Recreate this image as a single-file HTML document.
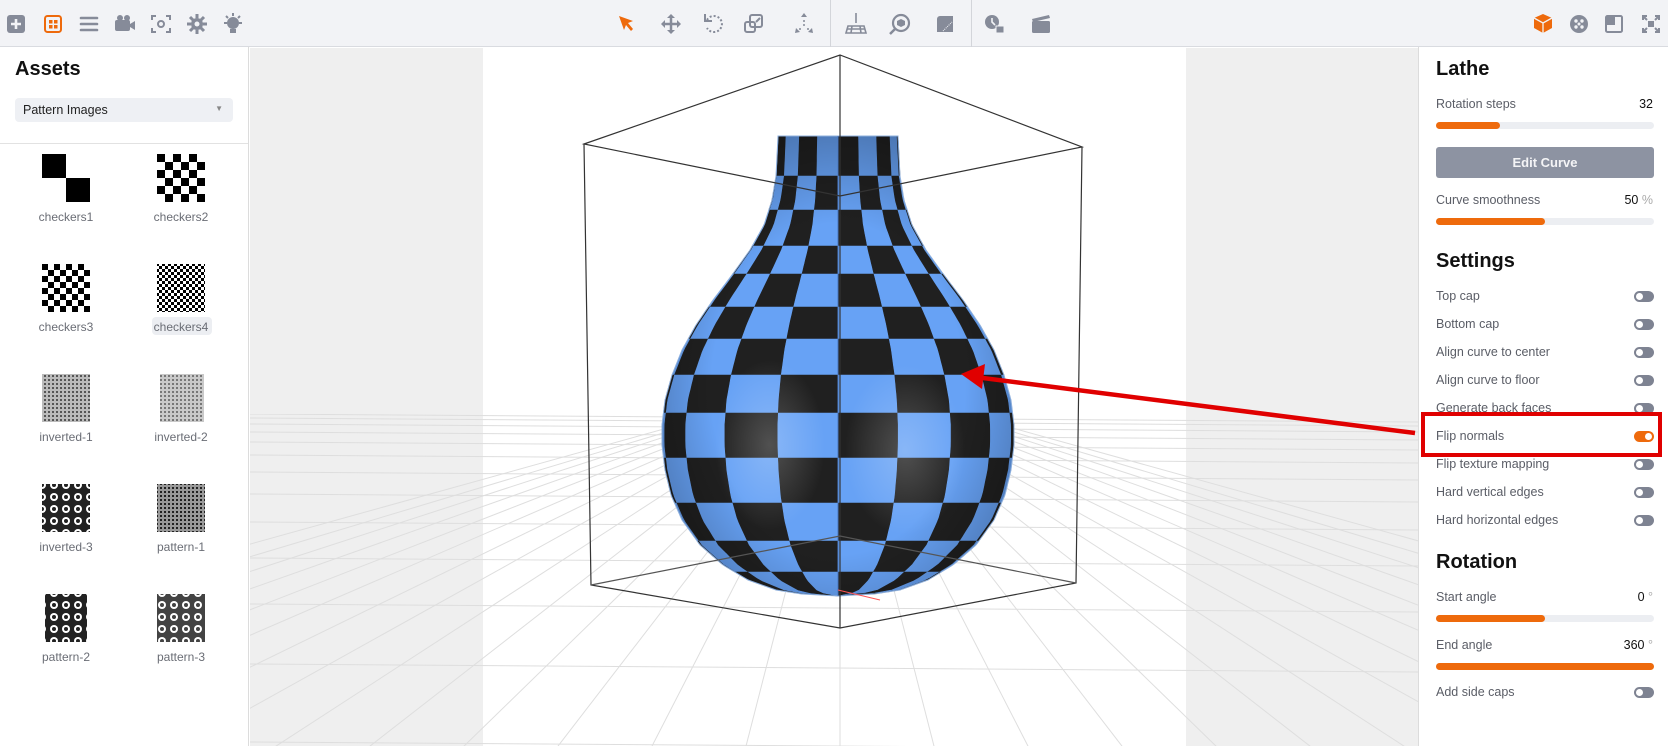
<!DOCTYPE html>
<html><head><meta charset="utf-8"><style>
*{margin:0;padding:0;box-sizing:border-box}
html,body{width:1668px;height:746px;overflow:hidden}
body{background:#fff;font-family:"Liberation Sans",sans-serif;position:relative}
.tb{position:absolute;left:0;top:0;width:1668px;height:47px;background:#f2f3f6;border-bottom:1px solid #d9dbe0}
.sep{position:absolute;top:0;width:1px;height:47px;background:#d3d5da}
.lp{position:absolute;left:0;top:47px;width:249px;height:699px;background:#fff;border-right:1px solid #dcdcdc;overflow:hidden}
.rp{position:absolute;left:1418px;top:47px;width:250px;height:699px;background:#fff;border-left:1px solid #dcdcdc;overflow:hidden}
.h{position:absolute;font-weight:bold;font-size:20px;color:#111}
.lbl{position:absolute;font-size:12.5px;color:#5a5d66}
.val{position:absolute;right:15px;font-size:12.5px;color:#111}
.sl{position:absolute;left:17px;width:218px;height:7px;border-radius:4px;background:#eceef2}
.sl i{display:block;height:7px;border-radius:4px;background:#ee6a0c}
.tg{position:absolute;left:215px;width:20px;height:11px;border-radius:6px;background:#7e8392}
.tg:after{content:"";position:absolute;left:2px;top:2px;width:7px;height:7px;border-radius:50%;background:#fff}
.tg.on{background:#ee6a0c}.tg.on:after{left:11px}
.tl{position:absolute;font-size:12px;color:#6a6d75;text-align:center;width:100px}
</style></head><body>
<div class="tb">
<svg style="position:absolute;left:0;top:0" width="1668" height="47">
<rect x="7" y="15" width="18" height="18" rx="3" fill="#868b99"/>
<path d="M16 19v10M11 24h10" stroke="#f2f3f6" stroke-width="2.6"/>
<rect x="45" y="16" width="16" height="16" rx="2.5" fill="none" stroke="#ee6a0c" stroke-width="2"/>
<g fill="#ee6a0c"><rect x="49" y="20" width="3.5" height="3.5"/><rect x="54" y="20" width="3.5" height="3.5"/><rect x="49" y="25" width="3.5" height="3.5"/><rect x="54" y="25" width="3.5" height="3.5"/></g>
<g stroke="#868b99" stroke-width="2.6" stroke-linecap="round"><path d="M81 18h16M81 24h16M81 30h16"/></g>
<g fill="#868b99"><circle cx="120" cy="18" r="3"/><circle cx="127" cy="18" r="3"/><rect x="115" y="20" width="15" height="11" rx="2"/><path d="M130 24l5-3v9l-5-3z"/></g>
<g fill="none" stroke="#868b99" stroke-width="2"><path d="M152 20v-4h4M166 16h4v4M170 28v4h-4M156 32h-4v-4"/><circle cx="161" cy="24" r="3"/></g>
<circle cx="197" cy="24" r="6" fill="#868b99"/>
<circle cx="197" cy="24" r="2.5" fill="#f2f3f6"/>
<g stroke="#868b99" stroke-width="3"><path d="M197 14v4M197 30v4M187 24h4M203 24h4M190 17l3 3M204 17l-3 3M190 31l3-3M204 31l-3-3"/></g>
<g fill="#868b99"><circle cx="233" cy="23" r="6"/><rect x="230" y="29" width="6" height="4"/></g>
<g stroke="#868b99" stroke-width="2"><path d="M233 13v3M224 23h3M239 23h3M226 16l2 2M240 16l-2 2"/></g>
<path d="M619 16l14 5-5 2 5 6-2 2-5-6-2 5z" fill="#ee6a0c"/>
<g fill="#868b99"><path d="M671 14l4 4h-8zM671 34l4-4h-8zM661 24l4-4v8zM681 24l-4-4v8z"/></g><path d="M671 17v14M664 24h14" stroke="#868b99" stroke-width="2.5"/>
<path d="M707 20a8 8 0 1 1 0 8" fill="none" stroke="#868b99" stroke-width="2" stroke-dasharray="2 2"/><path d="M705 14v7h7" fill="none" stroke="#868b99" stroke-width="2"/>
<rect x="750" y="15" width="12" height="12" rx="2" fill="none" stroke="#868b99" stroke-width="2"/><rect x="745" y="22" width="10" height="10" rx="2" fill="none" stroke="#868b99" stroke-width="2"/><path d="M756 22l4-4" stroke="#868b99" stroke-width="2"/>
<g fill="#868b99"><path d="M804 13l3 4h-6zM795 33l1-5 4 4zM813 33l-1-5-4 4z"/><circle cx="804" cy="21" r="1"/><circle cx="804" cy="25" r="1"/><circle cx="800" cy="29" r="1"/><circle cx="808" cy="29" r="1"/></g>
<g stroke="#868b99" stroke-width="1.6" fill="none"><path d="M856 13v10"/><path d="M848 26h16l2 7h-20z"/><path d="M852 26l-1 7M860 26l1 7M847 29h18"/></g>
<circle cx="901" cy="23" r="8" fill="none" stroke="#868b99" stroke-width="2.2"/><path d="M895 29l-5 5" stroke="#868b99" stroke-width="2.5"/><path d="M901 19l4 2v4l-4 2-4-2v-4z" fill="#868b99"/>
<path d="M937 32l0-13a3 3 0 0 1 3-3h13v16z" fill="#868b99"/><path d="M943 31l9-9" stroke="#f2f3f6" stroke-width="1" stroke-dasharray="1 1"/>
<circle cx="992" cy="22" r="7" fill="#868b99"/><path d="M992 18v4l3 3" stroke="#f2f3f6" stroke-width="1.6" fill="none"/><rect x="996" y="26" width="8" height="7" fill="#868b99" stroke="#f2f3f6"/>
<rect x="1032" y="21" width="18" height="12" rx="1.5" fill="#868b99"/><path d="M1032 19l17-4 1 3-17 4z" fill="#868b99"/>
<path d="M1543 14l9 4v10l-9 5-9-5v-10z" fill="#ee6a0c"/><path d="M1534 18l9 5 9-5M1543 23v10" stroke="#f2f3f6" stroke-width="1.3" fill="none"/>
<circle cx="1579" cy="24" r="9" fill="#868b99"/><g fill="#f2f3f6"><circle cx="1576" cy="21" r="1.7"/><circle cx="1582" cy="21" r="1.7"/><circle cx="1576" cy="27" r="1.7"/><circle cx="1582" cy="27" r="1.7"/><circle cx="1579" cy="24" r="1.5"/></g>
<rect x="1606" y="16" width="16" height="16" rx="1.5" fill="none" stroke="#868b99" stroke-width="2"/><path d="M1607 17h8v8h-8z" fill="#868b99"/>
<g stroke="#868b99" stroke-width="2" fill="none"><path d="M1643 16l4 4M1659 16l-4 4M1643 32l4-4M1659 32l-4-4M1643 20v-4h4M1659 20v-4h-4M1643 28v4h4M1659 28v4h-4"/></g><rect x="1648" y="21" width="6" height="6" fill="#868b99"/>
</svg>
<div class="sep" style="left:830px"></div><div class="sep" style="left:971px"></div>
</div>

<div class="lp">
<div class="h" style="left:15px;top:11px">Assets</div>
<div style="position:absolute;left:15px;top:51px;width:218px;height:24px;background:#eef0f4;border-radius:4px;font-size:12.5px;color:#222;padding:5px 8px">Pattern Images<span style="position:absolute;right:10px;top:6px;font-size:8px;color:#888">▼</span></div>
<div style="position:absolute;left:0;top:96px;width:249px;height:1px;background:#e2e2e2"></div>
<svg style="position:absolute;left:0;top:0" width="249" height="699">
<defs>
<pattern id="c2" width="16" height="16" patternUnits="userSpaceOnUse" x="157" y="107"><rect width="8" height="8"/><rect x="8" y="8" width="8" height="8"/></pattern>
<pattern id="c3" width="12" height="12" patternUnits="userSpaceOnUse" x="42" y="217"><rect width="6" height="6"/><rect x="6" y="6" width="6" height="6"/></pattern>
<pattern id="c4" width="6" height="6" patternUnits="userSpaceOnUse"><rect width="3" height="3"/><rect x="3" y="3" width="3" height="3"/></pattern>
<pattern id="i1" width="4" height="4" patternUnits="userSpaceOnUse"><rect width="4" height="4" fill="#bbb"/><rect width="2" height="2" fill="#555"/></pattern>
<pattern id="p3" width="12" height="12" patternUnits="userSpaceOnUse"><rect width="12" height="12" fill="#222"/><circle cx="6" cy="6" r="4" fill="#fff"/><circle cx="6" cy="6" r="2" fill="#222"/></pattern>
<pattern id="p1" width="4" height="4" patternUnits="userSpaceOnUse"><rect width="4" height="4" fill="#999"/><rect width="2" height="2" fill="#222"/></pattern>
</defs>
<g transform="translate(42,107)"><rect width="24" height="24"/><rect x="24" y="24" width="24" height="24"/></g>
<rect x="157" y="107" width="48" height="48" fill="url(#c2)"/>
<rect x="42" y="217" width="48" height="48" fill="url(#c3)"/>
<rect x="157" y="217" width="48" height="48" fill="url(#c4)"/>
<rect x="42" y="327" width="48" height="48" fill="url(#i1)"/>
<rect x="160" y="327" width="44" height="48" fill="url(#i1)" opacity=".8"/>
<rect x="42" y="437" width="48" height="48" fill="url(#p3)"/>
<rect x="157" y="437" width="48" height="48" fill="url(#p1)"/>
<rect x="45" y="547" width="42" height="48" fill="url(#p3)"/>
<rect x="157" y="547" width="48" height="48" fill="url(#p3)" opacity=".85"/>
</svg>
<div class="tl" style="left:16px;top:163px">checkers1</div>
<div class="tl" style="left:131px;top:163px">checkers2</div>
<div class="tl" style="left:16px;top:273px">checkers3</div>
<div style="position:absolute;left:152px;top:270px;width:60px;height:18px;background:#eceef2;border-radius:4px"></div>
<div class="tl" style="left:131px;top:273px">checkers4</div>
<div class="tl" style="left:16px;top:383px">inverted-1</div>
<div class="tl" style="left:131px;top:383px">inverted-2</div>
<div class="tl" style="left:16px;top:493px">inverted-3</div>
<div class="tl" style="left:131px;top:493px">pattern-1</div>
<div class="tl" style="left:16px;top:603px">pattern-2</div>
<div class="tl" style="left:131px;top:603px">pattern-3</div>
</div>

<svg id="vp" style="position:absolute;left:250px;top:48px;display:block" width="1168" height="698" viewBox="250 48 1168 698">
<rect x="250" y="48" width="1168" height="698" fill="#efefef"/>
<rect x="483" y="48" width="703" height="698" fill="#fff"/>
<g id="grid" stroke="#dedede" stroke-width="1" fill="none"></g>
<g id="vase"></g>
<g stroke="#333" stroke-width="1.2" fill="none">
<path d="M584 144L840 55L1082 147L840 196Z"/>
<path d="M584 144L591 585L840 628L1076 583L1082 147"/>
<path d="M840 55V628"/>
<path d="M591 585L840 536L1076 583" stroke="#555"/>
</g>
<path d="M1415 433L975 377" stroke="#e00000" stroke-width="4.5"/>
<path d="M961 374L985 364L982 389Z" fill="#e00000"/>
<path d="M838 590l42 10" stroke="#f55" stroke-width="1"/>
</svg>

<div class="rp">
<div class="h" style="left:17px;top:11px">Lathe</div>
<div class="lbl" style="left:17px;top:50px">Rotation steps</div><div class="val" style="top:50px">32</div>
<div class="sl" style="top:75px"><i style="width:64px"></i></div>
<div style="position:absolute;left:17px;top:100px;width:218px;height:31px;background:#8d93a2;border-radius:3px;color:#f4f4f6;font-weight:bold;font-size:13px;text-align:center;line-height:31px">Edit Curve</div>
<div class="lbl" style="left:17px;top:146px">Curve smoothness</div><div class="val" style="top:146px">50 <span style="color:#aaa">%</span></div>
<div class="sl" style="top:171px"><i style="width:109px"></i></div>
<div class="h" style="left:17px;top:203px">Settings</div>
<div class="lbl" style="left:17px;top:242px">Top cap</div><div class="tg" style="top:244px"></div>
<div class="lbl" style="left:17px;top:270px">Bottom cap</div><div class="tg" style="top:272px"></div>
<div class="lbl" style="left:17px;top:298px">Align curve to center</div><div class="tg" style="top:300px"></div>
<div class="lbl" style="left:17px;top:326px">Align curve to floor</div><div class="tg" style="top:328px"></div>
<div class="lbl" style="left:17px;top:354px">Generate back faces</div><div class="tg" style="top:356px"></div>
<div class="lbl" style="left:17px;top:382px">Flip normals</div><div class="tg on" style="top:384px"></div>
<div class="lbl" style="left:17px;top:410px">Flip texture mapping</div><div class="tg" style="top:412px"></div>
<div class="lbl" style="left:17px;top:438px">Hard vertical edges</div><div class="tg" style="top:440px"></div>
<div class="lbl" style="left:17px;top:466px">Hard horizontal edges</div><div class="tg" style="top:468px"></div>
<div class="h" style="left:17px;top:504px">Rotation</div>
<div class="lbl" style="left:17px;top:543px">Start angle</div><div class="val" style="top:543px">0 <span style="color:#aaa">°</span></div>
<div class="sl" style="top:568px"><i style="width:109px"></i></div>
<div class="lbl" style="left:17px;top:591px">End angle</div><div class="val" style="top:591px">360 <span style="color:#aaa">°</span></div>
<div class="sl" style="top:616px"><i style="width:218px"></i></div>
<div class="lbl" style="left:17px;top:638px">Add side caps</div><div class="tg" style="top:640px"></div>
</div>
<div style="position:absolute;left:1421px;top:412px;width:241px;height:45px;border:4px solid #e00000"></div>

<script>
(function(){
var g=document.getElementById('grid'),s='';
var vx=840,vy=380;
for(var i=-14;i<=14;i++){var bx=vx+i*95;s+='<path d="M'+vx+' '+vy+'L'+(vx+(bx-vx)*12)+' '+(vy+370*12)+'" />';}
var ys=[418,422,428,436,446,459,476,498,526,562,608,668,746];
for(var j=0;j<ys.length;j++){s+='<path d="M250 '+(ys[j]-4)+'L1418 '+(ys[j]+4)+'"/>';}
g.innerHTML='<defs><clipPath id="gc"><rect x="250" y="414" width="1168" height="340"/></clipPath></defs><g clip-path="url(#gc)">'+s+'</g>';
var P=[[136,60],[176,62],[200,66],[225,74],[250,88],[275,106],[300,125],[325,142],[350,156],[375,166],[400,173],[425,176],[445,176],[470,173],[495,167],[520,156],[545,138],[565,115],[580,90],[590,62],[595,30],[596,0]];
function R(y){for(var k=0;k<P.length-1;k++){if(y>=P[k][0]&&y<=P[k+1][0]){var t=(y-P[k][0])/(P[k+1][0]-P[k][0]);return P[k][1]+(P[k+1][1]-P[k][1])*t;}}return 0;}
var rows=[136,176,210,246,274,307,339,375,413,458,503,541,572,596];
var cx=838,h='';
for(var r=0;r<rows.length-1;r++){
 for(var c=-5;c<5;c++){
  var a0=Math.max(-90,c*20),a1=Math.min(90,(c+1)*20);
  if(a0>=a1)continue;
  var pts=[],n=8,y,k;
  for(k=0;k<=n;k++){y=rows[r]+(rows[r+1]-rows[r])*k/n;pts.push((cx+R(y)*Math.sin(a0*Math.PI/180)).toFixed(1)+','+y.toFixed(1));}
  for(k=n;k>=0;k--){y=rows[r]+(rows[r+1]-rows[r])*k/n;pts.push((cx+R(y)*Math.sin(a1*Math.PI/180)).toFixed(1)+','+y.toFixed(1));}
  var dark=((r+c)%2+2)%2==0;
  var col=dark?'#202020':'#67a2f5';
  h+='<polygon points="'+pts.join(' ')+'" fill="'+col+'" stroke="'+col+'" stroke-width="0.6"/>';
 }
}
var out='M'+cx+' 136';
for(var yy=136;yy<=596;yy+=2)out+='L'+(cx+R(yy)).toFixed(1)+' '+yy;
for(yy=596;yy>=136;yy-=2)out+='L'+(cx-R(yy)).toFixed(1)+' '+yy;
out+='Z';
h='<defs><radialGradient id="sh" cx="0.5" cy="0.55" r="0.6"><stop offset="0.6" stop-color="#000" stop-opacity="0"/><stop offset="1" stop-color="#000" stop-opacity="0.3"/></radialGradient><radialGradient id="hl" cx="0.5" cy="0.5" r="0.5"><stop offset="0" stop-color="#fff" stop-opacity="0.22"/><stop offset="1" stop-color="#fff" stop-opacity="0"/></radialGradient></defs>'+h+
'<path d="'+out+'" fill="url(#sh)" stroke="#8fb0dc" stroke-width="1"/><ellipse cx="905" cy="450" rx="60" ry="85" fill="url(#hl)"/><ellipse cx="770" cy="445" rx="55" ry="85" fill="url(#hl)"/><path d="M838 136V596" stroke="#4a78c0" stroke-width="1"/>';
document.getElementById('vase').innerHTML=h;
})();
</script>
</body></html>
